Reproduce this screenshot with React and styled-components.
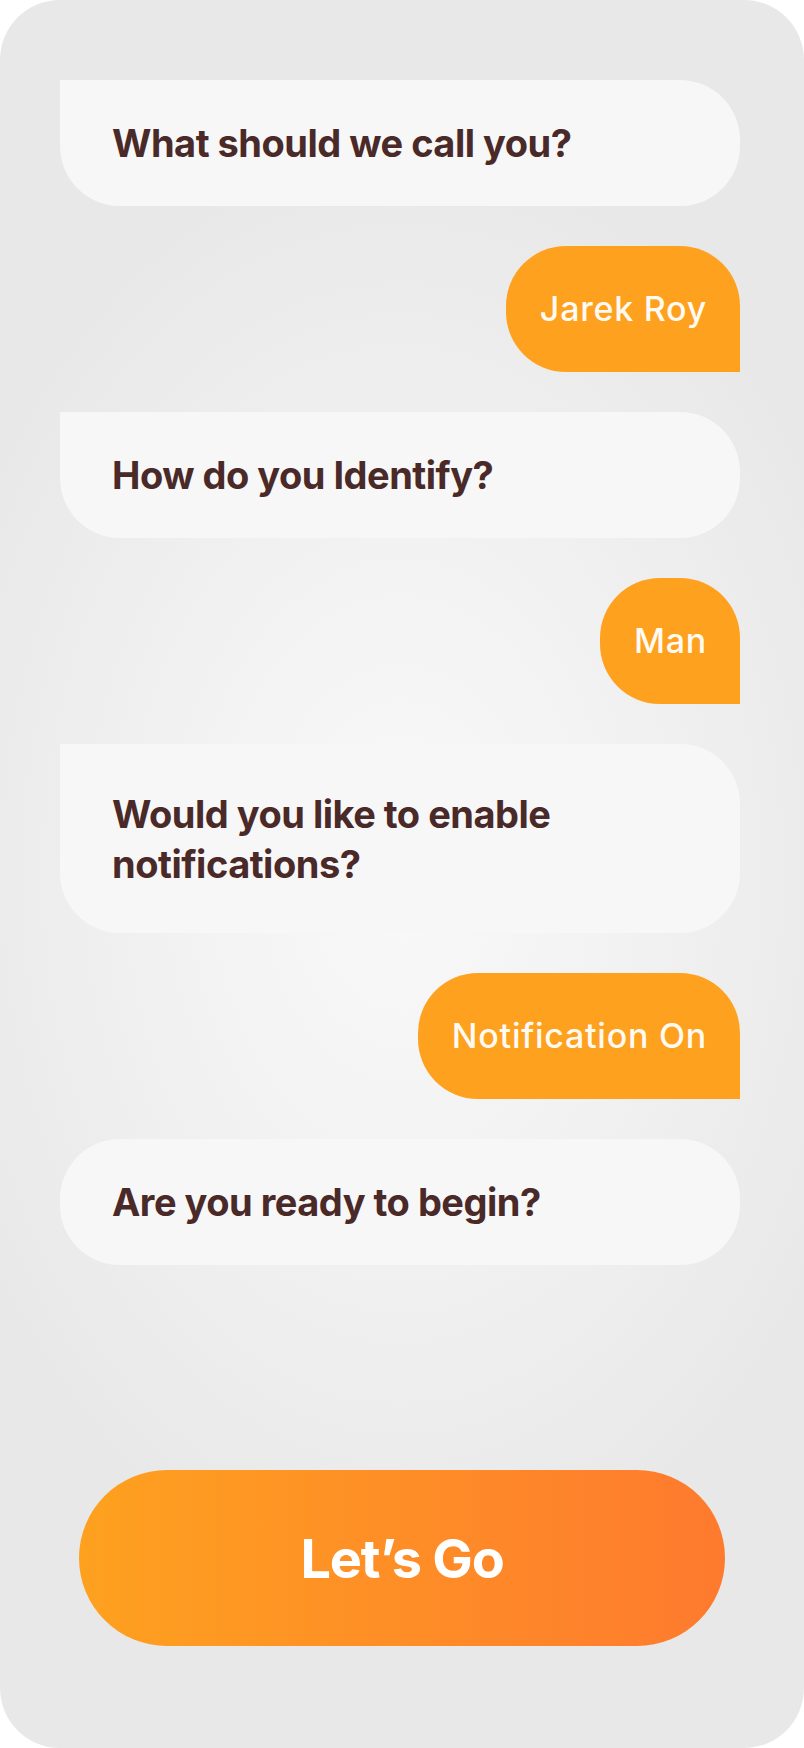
import React from "react";
import styled, { createGlobalStyle } from "styled-components";

const GlobalStyle = createGlobalStyle`
  * { box-sizing: border-box; }
  html, body { margin: 0; padding: 0; background: #ffffff; }
  body { font-family: "Inter", "Roboto", "Liberation Sans", sans-serif; }
`;

const Screen = styled.div`
  width: 804px;
  min-height: 100vh;
  border-radius: 60px;
  background: radial-gradient(ellipse 62% 42% at 50% 50%, #f9f9f9 0%, #f2f2f2 45%, #e8e8e8 100%);
  display: flex;
  flex-direction: column;
  padding: 80px 64px 102px 60px;
`;

const Thread = styled.div`
  display: flex;
  flex-direction: column;
  gap: 40px;
`;

const Question = styled.div`
  align-self: stretch;
  background: #f7f7f7;
  color: #4a2a28;
  font-size: 38px;
  font-weight: 700;
  line-height: 50px;
  letter-spacing: -0.5px;
  padding: ${(p) => (p.$tall ? "44.5px" : "38px")} 52px;
  border-radius: ${(p) => (p.$round ? "60px" : "0 60px 60px 60px")};
`;

const Answer = styled.div`
  align-self: flex-end;
  background: #fea11f;
  color: #fffaf2;
  font-size: 34px;
  font-weight: 500;
  line-height: 50px;
  letter-spacing: 0.75px;
  padding: 38px 33px 38px 34px;
  border-radius: 60px 60px 0 60px;
`;

const Spacer = styled.div`
  flex: 1;
`;

const GoButton = styled.button`
  align-self: center;
  margin-left: 4px;
  width: 646px;
  height: 176px;
  border: none;
  border-radius: 88px;
  background: linear-gradient(90deg, #fea11f 0%, #fe7a2e 100%);
  color: #ffffff;
  font-family: "Inter", "Roboto", "Liberation Sans", sans-serif;
  font-size: 54px;
  font-weight: 700;
  letter-spacing: -1.2px;
  cursor: pointer;
`;

export default function App() {
  return (
    <>
      <GlobalStyle />
      <Screen>
        <Thread>
          <Question>What should we call you?</Question>
          <Answer>Jarek Roy</Answer>
          <Question>How do you Identify?</Question>
          <Answer>Man</Answer>
          <Question $tall>
            Would you like to enable
            <br />
            notifications?
          </Question>
          <Answer>Notification On</Answer>
          <Question $round>Are you ready to begin?</Question>
        </Thread>
        <Spacer />
        <GoButton>Let’s Go</GoButton>
      </Screen>
    </>
  );
}
